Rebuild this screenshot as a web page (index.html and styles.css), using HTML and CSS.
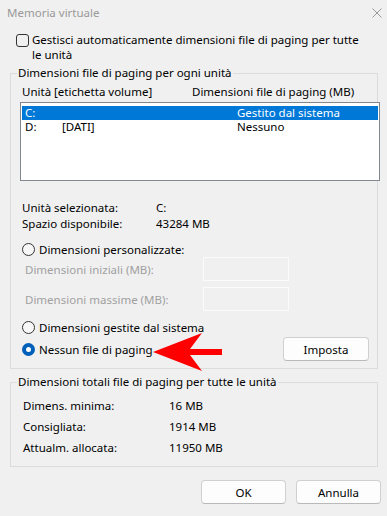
FILE: index.html
```html
<!DOCTYPE html>
<html lang="it">
<head>
    <meta charset="UTF-8">
    <title>Memoria virtuale</title>
    <link rel="stylesheet" href="styles.css">
</head>
<body>
    <div class="dialog">
        <div class="titlebar">
            <span class="title">Memoria virtuale</span>
            <svg class="close" width="10" height="10" viewBox="0 0 10 10">
                <path d="M0.5 0.5 L9.5 9.5 M9.5 0.5 L0.5 9.5" stroke="#9a9a9a" stroke-width="1" fill="none"/>
            </svg>
        </div>

        <label class="autocheck">
            <span class="checkbox"></span>
            <span class="autocheck-text">Gestisci automaticamente dimensioni file di paging per tutte<br>le unità</span>
        </label>

        <fieldset class="group group-drives">
            <legend class="group-title">Dimensioni file di paging per ogni unità</legend>

            <div class="list-header">
                <span>Unità [etichetta volume]</span>
                <span>Dimensioni file di paging (MB)</span>
            </div>

            <div class="listbox">
                <div class="list-row selected">
                    <span>C:</span>
                    <span></span>
                    <span>Gestito dal sistema</span>
                </div>
                <div class="list-row">
                    <span>D:</span>
                    <span>[DATI]</span>
                    <span>Nessuno</span>
                </div>
            </div>

            <div class="info">
                <span>Unità selezionata:</span>
                <span>C:</span>
                <span>Spazio disponibile:</span>
                <span>43284 MB</span>
            </div>

            <div class="radio-row radio-custom">
                <span class="radio"></span>
                <span>Dimensioni personalizzate:</span>
            </div>

            <div class="size-row size-initial">
                <span class="disabled-label">Dimensioni iniziali (MB):</span>
                <span class="textbox"></span>
            </div>
            <div class="size-row size-max">
                <span class="disabled-label">Dimensioni massime (MB):</span>
                <span class="textbox"></span>
            </div>

            <div class="radio-row radio-system">
                <span class="radio"></span>
                <span>Dimensioni gestite dal sistema</span>
            </div>

            <div class="radio-row radio-none">
                <span class="radio checked"></span>
                <span class="radio-label">Nessun file di paging</span>
                <button class="btn">Imposta</button>
            </div>
        </fieldset>

        <fieldset class="group group-totals">
            <legend class="group-title">Dimensioni totali file di paging per tutte le unità</legend>
            <div class="totals">
                <span>Dimens. minima:</span>
                <span>16 MB</span>
                <span>Consigliata:</span>
                <span>1914 MB</span>
                <span>Attualm. allocata:</span>
                <span>11950 MB</span>
            </div>
        </fieldset>

        <div class="actions">
            <button class="btn">OK</button>
            <button class="btn">Annulla</button>
        </div>

        <svg class="arrow" width="75" height="45" viewBox="0 0 75 45">
            <polygon points="3,22 52,3 40,19 72,19 72,25 40,25 52,41" fill="#ff0000"/>
        </svg>
    </div>
</body>
</html>
```

FILE: styles.css
```css
* {
    box-sizing: border-box;
}

body {
    margin: 0;
    background: #f0f0f0;
    font-family: 'Noto Sans', 'Segoe UI', sans-serif;
    font-size: 11.5px;
    color: #000;
}

.dialog {
    width: 387px;
    height: 516px;
    position: relative;
    display: flex;
    flex-direction: column;
}

.titlebar {
    height: 25px;
    display: flex;
    align-items: center;
    justify-content: space-between;
    padding: 0 5px 0 7px;
}

.title {
    color: #999;
}

.autocheck {
    display: flex;
    align-items: flex-start;
    margin: 7px 0 0 16px;
    line-height: 15px;
}

.checkbox {
    width: 13px;
    height: 13px;
    margin-top: 2px;
    border: 1px solid #333;
    border-radius: 3px;
    flex: none;
}

.autocheck-text {
    margin-left: 3px;
}

/* group boxes */
.group {
    margin: 3px 0 0 10px;
    width: 368px;
    min-width: 0;
    padding: 0 0 7px 0;
    border: 1px solid #dcdcdc;
}

.group-title {
    margin-left: 6px;
    padding: 0 1px;
    line-height: 16px;
}

.list-header {
    display: grid;
    grid-template-columns: 170px 1fr;
    margin-top: 3px;
    padding-left: 11px;
    line-height: 16px;
}

.listbox {
    width: 360px;
    height: 79px;
    margin: 2px 0 0 9px;
    padding: 3px 1px;
    background: #fff;
    border: 1px solid #828790;
}

.list-row {
    display: grid;
    grid-template-columns: 37px 175px 1fr;
    height: 14px;
    line-height: 14px;
    padding-left: 3px;
}

.list-row.selected {
    background: #0078d7;
    color: #fff;
}

.info {
    display: grid;
    grid-template-columns: 134px 1fr;
    margin-top: 19px;
    padding-left: 11px;
    line-height: 16px;
}

.radio-row {
    display: flex;
    align-items: center;
    margin-left: 11px;
    height: 15px;
}

.radio-custom {
    margin-top: 10px;
}

.radio-system {
    margin-top: 8px;
    height: 16px;
}

.radio-none {
    margin-top: 2px;
    height: 24px;
}

.radio {
    width: 13px;
    height: 13px;
    margin-right: 4px;
    border: 1px solid #333;
    border-radius: 50%;
    background: #f7f7f7;
    flex: none;
}

.radio.checked {
    border: 4px solid #005fb8;
    background: #fff;
}

.radio-label {
    flex: 1;
}

.size-row {
    display: flex;
    align-items: center;
    margin-left: 14px;
    height: 24px;
}

.size-max {
    margin-top: 6px;
}

.disabled-label {
    width: 178px;
    color: #a0a0a0;
}

.textbox {
    width: 86px;
    height: 24px;
    border: 1px solid #fbfbfb;
}

.btn {
    width: 86px;
    height: 24px;
    padding: 0;
    font: inherit;
    color: #000;
    background: #fdfdfd;
    border: 1px solid #d0d0d0;
    border-bottom-color: #b9b9b9;
    border-radius: 4px;
}

.radio-none .btn {
    margin-right: 8px;
}

.group-totals {
    margin-top: 5px;
    padding-bottom: 8px;
}

.totals {
    display: grid;
    grid-template-columns: 146px 1fr;
    grid-auto-rows: 21px;
    align-items: center;
    margin-top: 5px;
    padding-left: 12px;
}

.actions {
    display: flex;
    justify-content: flex-end;
    gap: 10px;
    margin: 13px 6px 0 0;
}

.actions .btn {
    width: 85px;
}

.arrow {
    position: absolute;
    left: 150px;
    top: 330px;
}
```
